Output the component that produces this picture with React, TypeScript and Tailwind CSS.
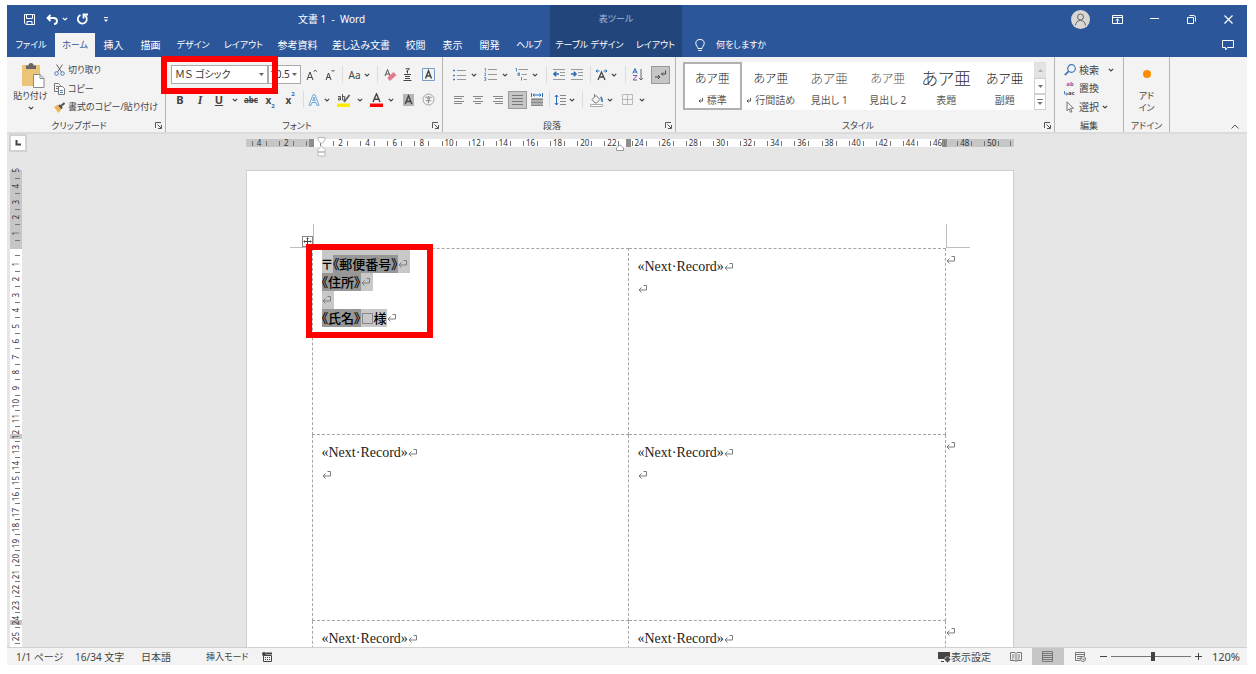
import React from "react";
import clsx from "clsx";

type IconProps = { className?: string };

/* ---------- small shared pieces ---------- */

function Svg({ w, h, className, children }: { w: number; h: number; className?: string; children: React.ReactNode }) {
  return (
    <svg
      width={w}
      height={h}
      viewBox={`0 0 ${w} ${h}`}
      fill="none"
      stroke="currentColor"
      aria-hidden="true"
      className={clsx("shrink-0", className)}
    >
      {children}
    </svg>
  );
}

function Chevron({ className }: IconProps) {
  return (
    <Svg w={6} h={4} className={className}>
      <path d="M.8.8 3 3 5.2.8" strokeWidth="1.200" />
    </Svg>
  );
}

function Caret({ className }: IconProps) {
  return (
    <Svg w={5} h={3} className={className}>
      <path d="M0 0h5L2.5 3z" fill="currentColor" stroke="none" />
    </Svg>
  );
}

function Return({ className }: IconProps) {
  return (
    <Svg w={9} h={8} className={clsx("inline-block text-[#7c7c7c]", className)}>
      <path d="M5.500.5h3v4.500H1M3.500 2.500 1 5l2.500 2.500" />
    </Svg>
  );
}

function Launcher() {
  return (
    <button type="button" aria-label="詳細設定" className="absolute right-[3px] bottom-[3px] text-[#555]">
      <Svg w={7} h={7}>
        <path d="M.5 6V.5H6M2.500 2.500 6 6M6.500 3v3.500H3" />
      </Svg>
    </button>
  );
}

function Tool({ label, className, children }: { label: string; className: string; children: React.ReactNode }) {
  return (
    <button
      type="button"
      aria-label={label}
      title={label}
      className={clsx("flex h-[18px] shrink-0 items-center justify-center leading-none text-[#444] hover:bg-[#d5d5d5]", className)}
    >
      {children}
    </button>
  );
}

function Sep({ className }: IconProps) {
  return (
    <span className={clsx("flex h-[17px] shrink-0 justify-center", className)}>
      <span className="w-px bg-[#dcdcdc]" />
    </span>
  );
}

function Group({
  title,
  className,
  launcher,
  children,
}: {
  title: string;
  className: string;
  launcher?: boolean;
  children: React.ReactNode;
}) {
  return (
    <section aria-label={title} className={clsx("relative flex flex-col border-r border-[#b4b4b4] pt-[5px]", className)}>
      <div className="flex-1">{children}</div>
      <div className={clsx("text-center text-[9px] leading-3 text-[#444]", launcher && "pr-[14px]")}>{title}</div>
      {launcher && <Launcher />}
    </section>
  );
}

/* ---------- title bar and tabs ---------- */

const TABS = [
  { name: "ファイル", width: "w-[48px] text-[9px]" },
  { name: "ホーム", width: "w-[40px] text-[9px]", active: true },
  { name: "挿入", width: "w-[37px]" },
  { name: "描画", width: "w-[37px]" },
  { name: "デザイン", width: "w-[48px] text-[9px]" },
  { name: "レイアウト", width: "w-[53px] text-[9px]" },
  { name: "参考資料", width: "w-[55px]" },
  { name: "差し込み文書", width: "w-[72px]" },
  { name: "校閲", width: "w-[37px]" },
  { name: "表示", width: "w-[37px]" },
  { name: "開発", width: "w-[37px]" },
  { name: "ヘルプ", width: "w-[42px] text-[9px]" },
];

function Tab({ name, width, active }: { name: string; width: string; active?: boolean }) {
  return (
    <button
      type="button"
      role="tab"
      aria-selected={!!active}
      className={clsx(
        "flex h-6 shrink-0 items-center justify-center whitespace-nowrap",
        width,
        active ? "bg-[#f3f3f3] text-[#2b579a]" : "hover:bg-white/10"
      )}
    >
      {name}
    </button>
  );
}

function Header() {
  return (
    <header className="flex h-[52px] shrink-0 bg-[#2b579a] text-white">
      <div className="flex shrink-0 flex-col">
        <div className="flex h-7 items-center">
          <button type="button" aria-label="上書き保存" className="ml-[15px] flex w-[14px] justify-center">
            <Svg w={11} h={11}>
              <path d="M.5.5h10v10H2L.5 9zM2.500.5v4h6v-4M3 10.500V7.500h5v3" />
            </Svg>
          </button>
          <button type="button" aria-label="元に戻す" className="ml-[10px] flex items-center">
            <Svg w={12} h={11}>
              <path d="M4.500 1 1.500 4l3 3M2 4h5.500c2.200 0 3.500 1 3.500 3S9.500 10 8 10" strokeWidth="1.800" />
            </Svg>
            <Chevron className="ml-1" />
          </button>
          <button type="button" aria-label="やり直し" className="ml-2">
            <Svg w={13} h={12}>
              <path d="M4.500 2A4.500 4.500 0 1 0 9 2.500M7.500 5.500V1.500h4.500" strokeWidth="1.800" />
            </Svg>
          </button>
          <button type="button" aria-label="クイック アクセスのカスタマイズ" className="ml-[15px]">
            <Svg w={4} h={5}>
              <path d="M0 .5h4" />
              <path d="M0 2.500h4L2 5z" fill="currentColor" stroke="none" />
            </Svg>
          </button>
          <h1 className="ml-[190px] whitespace-pre">文書 1&nbsp; -&nbsp; Word</h1>
        </div>
        <div role="tablist" className="flex">
          {TABS.map((tab) => (
            <Tab key={tab.name} {...tab} />
          ))}
        </div>
      </div>

      <div className="flex shrink-0 flex-col bg-[#22467c]">
        <div className="flex h-7 items-center justify-center text-[9px] text-[#a9bad4]">表ツール</div>
        <div role="tablist" className="flex">
          <Tab name="テーブル デザイン" width="w-[79px] text-[9px]" />
          <Tab name="レイアウト" width="w-[53px] text-[9px]" />
        </div>
      </div>

      <div className="flex min-w-0 flex-1 flex-col">
        <div className="flex h-7 items-center justify-end">
          <button type="button" aria-label="アカウント" className="rounded-full bg-[#d9d6d3] text-[#666]">
            <Svg w={19} h={19}>
              <circle cx="9.500" cy="7" r="3" />
              <path d="M4.500 15.500c.3-3.400 2.300-5 5-5s4.700 1.600 5 5" />
            </Svg>
          </button>
          <button type="button" aria-label="リボンの表示オプション" className="ml-[22px]">
            <Svg w={11} h={9}>
              <path d="M.5.5h10v8H.5zM.5 2.500h10M5.500 8V4M3.700 5.700l1.800-1.700 1.800 1.700" />
            </Svg>
          </button>
          <button type="button" aria-label="最小化" className="ml-[27px]">
            <Svg w={9} h={9}>
              <path d="M0 3.500h9" />
            </Svg>
          </button>
          <button type="button" aria-label="元のサイズに戻す" className="ml-[28px]">
            <Svg w={9} h={9}>
              <path d="M.5 2.500h6v6h-6zM2.500.5h4a2 2 0 0 1 2 2v4" />
            </Svg>
          </button>
          <button type="button" aria-label="閉じる" className="mr-[14px] ml-[28px]">
            <Svg w={9} h={9}>
              <path d="m.5.5 8 8M8.500.5l-8 8" strokeWidth="1.200" />
            </Svg>
          </button>
        </div>
        <div className="flex h-6 items-center">
          <button type="button" className="ml-[13px] flex items-center gap-[11px] text-[9px]">
            <Svg w={10} h={13}>
              <path d="M3 9.500C3 7.500.8 7 .8 4.500a4.200 4 0 0 1 8.400 0C9.200 7 7 7.500 7 9.500zM3.200 11.500h3.600" />
            </Svg>
            何をしますか
          </button>
          <button type="button" aria-label="コメント" className="mr-[13px] ml-auto">
            <Svg w={12} h={11}>
              <path d="M.5.5h11v7H5.500l-2 2.500v-2.500h-3z" />
            </Svg>
          </button>
        </div>
      </div>
    </header>
  );
}

/* ---------- ribbon ---------- */

function ClipboardGroup() {
  return (
    <Group title="クリップボード" launcher className="w-[159px] shrink-0">
      <div className="flex text-[9px]">
        <button type="button" className="flex w-[47px] shrink-0 flex-col items-center text-[#444]">
          <Svg w={24} h={26} className="ml-1">
            <path d="M1 3h18v21H1z" fill="#ecc477" stroke="none" />
            <path d="M5 3.500h2.500a2.500 2.500 0 0 1 5 0H15V7H5z" fill="#666" stroke="none" />
            <path d="M12.500 12.500h6.500l4 4v9H12.500z" fill="#fff" stroke="#8a8a8a" />
            <path d="M19 12.500v4h4" stroke="#8a8a8a" />
          </Svg>
          <span className="mt-px leading-[14px] whitespace-nowrap">貼り付け</span>
          <Chevron className="mt-[3px]" />
        </button>
        <div className="-mt-px text-[#444]">
          <button type="button" className="flex h-[18px] items-center gap-[3px]">
            <Svg w={11} h={12}>
              <path d="M2.500.5 7.500 8M8.500.5l-5 7.500" stroke="#666" />
              <circle cx="2.500" cy="9.500" r="1.800" stroke="#4a7ebb" />
              <circle cx="8.500" cy="9.500" r="1.800" stroke="#4a7ebb" />
            </Svg>
            切り取り
          </button>
          <button type="button" className="flex h-[19px] items-center gap-[3px]">
            <Svg w={11} h={12}>
              <path d="M.5.5h4L6.500 2.500v6h-6zM2 3.500h3M2 5.500h3" stroke="#777" />
              <path d="M4.500 3.500h4l2 2v6h-6z" fill="#fff" stroke="#777" />
              <path d="M6 7.500h3M6 9.500h3" stroke="#4a7ebb" />
            </Svg>
            コピー
          </button>
          <button type="button" className="flex h-[18px] items-center gap-[3px] whitespace-nowrap">
            <Svg w={11} h={11}>
              <path d="M0 5 4 2.500 7.500 7 4.500 11z" fill="#ecb45c" stroke="none" />
              <path d="m5 3 3 3.500M7 4l3.500-3" stroke="#555" strokeWidth="2" />
            </Svg>
            書式のコピー/貼り付け
          </button>
        </div>
      </div>
    </Group>
  );
}

function FontGroup() {
  return (
    <Group title="フォント" launcher className="w-[277px] shrink-0">
      <div className="relative flex h-[25px] items-center pl-[5px]">
        <div className="relative">
          <select
            aria-label="フォント"
            className="h-[19px] w-[97px] appearance-none border border-[#ababab] bg-white pl-[3px] text-[#333]"
          >
            <option>ＭＳ ゴシック</option>
          </select>
          <Caret className="pointer-events-none absolute top-2 right-1 text-[#666]" />
        </div>
        <div className="relative">
          <select
            aria-label="フォント サイズ"
            className="h-[19px] w-[33px] appearance-none border border-[#ababab] bg-white pl-px text-[#333]"
          >
            <option>10.5</option>
          </select>
          <Caret className="pointer-events-none absolute top-2 right-1 text-[#666]" />
        </div>
        <Tool label="フォント サイズの拡大" className="w-5">
          <Svg w={11} h={12}>
            <path d="m1 11 3-8 3 8M2 8.500h4M7.800 2.700 9.300 1l1.500 1.700" />
          </Svg>
        </Tool>
        <Tool label="フォント サイズの縮小" className="w-[18px]">
          <Svg w={10} h={12}>
            <path d="m1 11 2.500-7L6 11M2 8.500h3M6.500 1 8 2.500 9.500 1" />
          </Svg>
        </Tool>
        <Sep className="w-[7px]" />
        <Tool label="文字種の変換" className="w-[17px]">
          Aa
        </Tool>
        <Tool label="文字種の変換のオプション" className="w-2">
          <Chevron />
        </Tool>
        <Sep className="w-3" />
        <Tool label="すべての書式をクリア" className="w-[14px]">
          <Svg w={13} h={13}>
            <path d="m1 8 2.500-6.500L6 8M2 6h3" stroke="#555" />
            <path d="M3.500 9.500 9.500 4l3 3-6 5.500H5z" fill="#e57a8b" stroke="none" />
          </Svg>
        </Tool>
        <Tool label="ルビ" className="w-5">
          <Svg w={9} h={13}>
            <path d="M2.500.8h4L3.500 3.500M4.500 2.500v3M1 6.500h7M2 8.500h5M2 10.500h5M.5 12.500h8" />
          </Svg>
        </Tool>
        <Tool label="囲み線" className="w-[22px]">
          <Svg w={13} h={13}>
            <path d="M.5.5h12v12H.5z" stroke="#7c9cc8" />
            <path d="M3.500 10.500 6.500 2.800l3 7.700M4.500 8h4" strokeWidth="1.400" />
          </Svg>
        </Tool>
        {/* highlight around the font name */}
        <div className="pointer-events-none absolute -top-[6px] -left-[5px] h-[38px] w-[117px] border-6 border-[#ff0000]" />
      </div>
      <div className="flex h-[25px] items-center pl-[5px]">
        <Tool label="太字" className="w-[18px] text-[11px] font-bold">
          B
        </Tool>
        <Tool label="斜体" className="w-[22px] font-['Liberation_Serif',serif] text-[12px] font-bold italic">
          I
        </Tool>
        <Tool label="下線" className="w-4 text-[11px] font-bold underline">
          U
        </Tool>
        <Tool label="下線のオプション" className="w-4">
          <Chevron />
        </Tool>
        <Tool label="取り消し線" className="w-4 text-[8px] font-bold line-through">
          abc
        </Tool>
        <Tool label="下付き" className="w-[22px] font-bold">
          x<span className="self-end text-[6px] text-[#2b6cb5]">2</span>
        </Tool>
        <Tool label="上付き" className="w-[18px] font-bold">
          x<span className="self-start text-[6px] text-[#2b6cb5]">2</span>
        </Tool>
        <Sep className="w-2" />
        <Tool label="文字の効果と体裁" className="w-[14px]">
          <Svg w={12} h={12}>
            <path d="M1 11.300 5 .8h2l4 10.500H9L8 8.500H4l-1 2.800zM4.700 6.700h2.600L6 3z" fill="#fff" stroke="#5b9bd5" strokeWidth=".9" />
          </Svg>
        </Tool>
        <Tool label="文字の効果のオプション" className="w-3">
          <Chevron />
        </Tool>
        <Tool label="蛍光ペンの色" className="w-[22px]">
          <Svg w={14} h={14}>
            <path d="M0 10.500h13V14H0z" fill="#ffeb00" stroke="none" />
            <path d="M1 3.500h2.500V7H1.500V5.200h2M5.500 1v6h2.200V3.500H5.500" strokeWidth=".9" />
            <path d="m7 9 5.500-7" stroke="#666" strokeWidth="2" />
          </Svg>
        </Tool>
        <Tool label="蛍光ペンのオプション" className="w-[10px]">
          <Chevron />
        </Tool>
        <Tool label="フォントの色" className="w-[22px]">
          <Svg w={13} h={14}>
            <path d="M0 10.500h13V14H0z" fill="#ff0000" stroke="none" />
            <path d="M3 9 6.500.8 10 9M4.200 6.300h4.600" strokeWidth="1.400" />
          </Svg>
        </Tool>
        <Tool label="フォントの色のオプション" className="w-2">
          <Chevron />
        </Tool>
        <Tool label="文字の網かけ" className="w-[26px]">
          <Svg w={11} h={12}>
            <path d="M0 0h11v12H0z" fill="#b5b5b5" stroke="none" />
            <path d="M2.200 10 5.500 1.800 8.800 10M3.500 7.500h4" strokeWidth="1.400" />
          </Svg>
        </Tool>
        <Tool label="囲い文字" className="w-[14px]">
          <Svg w={13} h={13}>
            <circle cx="6.500" cy="6.500" r="5.500" stroke="#999" strokeWidth=".9" />
            <path d="M6.500 3v1M3.800 5V4.200h5.400V5M5 5.700h3L6.500 7v3H5.700M3.800 7.700h5.400" stroke="#666" strokeWidth=".7" />
          </Svg>
        </Tool>
      </div>
    </Group>
  );
}

function AlignIcon({ d }: { d: string }) {
  return (
    <Svg w={12} h={10}>
      <path d={d} stroke="#888" />
    </Svg>
  );
}

function ParagraphGroup() {
  return (
    <Group title="段落" launcher className="w-[233px] shrink-0">
      <div className="flex h-[25px] items-center pl-[9px]">
        <Tool label="箇条書き" className="w-[14px]">
          <Svg w={13} h={12}>
            <path d="M0 1.500h2M0 6.500h2M0 10.500h2" stroke="#4a7ebb" strokeWidth="1.600" />
            <path d="M4 1.500h9M4 6.500h9M4 10.500h9" stroke="#999" />
          </Svg>
        </Tool>
        <Tool label="箇条書きのオプション" className="w-4">
          <Chevron />
        </Tool>
        <Tool label="段落番号" className="w-4">
          <Svg w={13} h={13}>
            <path d="M.5.5h1v3M.3 5h1.400v1.200L.5 7.500h1.500M.3 9.500h1.500v3H.3M.5 11h1" stroke="#4a7ebb" strokeWidth=".8" />
            <path d="M4 1.500h9M4 6.500h9M4 11.500h9" stroke="#999" />
          </Svg>
        </Tool>
        <Tool label="段落番号のオプション" className="w-[14px]">
          <Chevron />
        </Tool>
        <Tool label="アウトライン" className="w-[18px]">
          <Svg w={13} h={13}>
            <path d="M.5.5h1v3M3 5h1.500v2.500H3zM6.500 9v3.500" stroke="#4a7ebb" strokeWidth=".9" />
            <path d="M3.500 1.500H13M6.500 6.500H12M8.500 11.500H12" stroke="#999" />
          </Svg>
        </Tool>
        <Tool label="アウトラインのオプション" className="w-[10px]">
          <Chevron />
        </Tool>
        <Sep className="w-3" />
        <Tool label="インデントを減らす" className="w-[14px]">
          <Svg w={12} h={11}>
            <path d="M0 .5h12M7 3.500h5M7 6.500h5M0 10.500h12" stroke="#999" />
            <path d="M6 5H1M3.200 2.800 1 5l2.200 2.200" stroke="#2b6cb5" strokeWidth="1.600" />
          </Svg>
        </Tool>
        <Tool label="インデントを増やす" className="w-[22px]">
          <Svg w={12} h={11}>
            <path d="M0 .5h12M7 3.500h5M7 6.500h5M0 10.500h12" stroke="#999" />
            <path d="M0 5h5M2.800 2.800 5 5 2.800 7.200" stroke="#2b6cb5" strokeWidth="1.600" />
          </Svg>
        </Tool>
        <Sep className="w-1" />
        <Tool label="拡張書式" className="w-[18px]">
          <Svg w={13} h={12}>
            <path d="m3 11 3.500-8 3.500 8M4 8h5" strokeWidth="1.300" />
            <path d="M1 2h3.500M2.500.5 1 2l1.500 1.500M12 2H8.500M10.500.5 12 2l-1.500 1.500" stroke="#2b6cb5" />
          </Svg>
        </Tool>
        <Tool label="拡張書式のオプション" className="w-2">
          <Chevron />
        </Tool>
        <Sep className="w-[14px]" />
        <Tool label="並べ替え" className="w-3">
          <Svg w={12} h={13}>
            <path d="m.8 5.500 2.200-5 2.200 5M1.500 4h3" stroke="#2b6cb5" />
            <path d="M1 7.500h4L1 12h4.200" stroke="#8a4fa3" />
            <path d="M9 1v11M7 10l2 2 2-2" stroke="#666" />
          </Svg>
        </Tool>
        <Tool label="編集記号の表示/非表示" className="ml-[7px] w-[19px] border border-[#9a9a9a] bg-[#c6c6c6]">
          <Svg w={13} h={12}>
            <path d="M1 8h5M4 6l2 2-2 2M11.500 1.500V5H7.500M9 3.500 7.500 5 9 6.500" />
          </Svg>
        </Tool>
      </div>
      <div className="flex h-[25px] items-center pl-[9px]">
        <Tool label="左揃え" className="w-[14px]">
          <AlignIcon d="M1 1.500h10M1 3.500h8M1 6.500h10M1 8.500h8" />
        </Tool>
        <Tool label="中央揃え" className="w-6">
          <AlignIcon d="M1 1.500h10M3 3.500h6M1 6.500h10M3 8.500h6" />
        </Tool>
        <Tool label="右揃え" className="w-4">
          <AlignIcon d="M1 1.500h10M3 3.500h8M1 6.500h10M3 8.500h8" />
        </Tool>
        <Tool label="両端揃え" className="ml-[2px] w-[19px] border border-[#9a9a9a] bg-[#c6c6c6]">
          <Svg w={11} h={11}>
            <path d="M0 1.500h11M0 4.500h11M0 7.500h11M0 10.500h11" stroke="#777" />
          </Svg>
        </Tool>
        <Tool label="均等割り付け" className="w-5">
          <Svg w={12} h={13}>
            <path d="M.5 0v4M11.500 0v4M2 2h8M3.500.7 2 2l1.500 1.300M8.500.7 10 2 8.500 3.300" stroke="#2b6cb5" />
            <path d="M0 5h12v8H0z" fill="#b0b0b0" stroke="none" />
            <path d="M0 6.500h12M0 9.500h12M0 12.500h12" stroke="#888" />
          </Svg>
        </Tool>
        <Sep className="w-1" />
        <Tool label="行と段落の間隔" className="w-[18px]">
          <Svg w={12} h={12}>
            <path d="M2.500 1v10M.8 3l1.700-2 1.700 2M.8 9l1.700 2 1.700-2" stroke="#2b6cb5" />
            <path d="M6 1.500h6M6 4.500h6M6 7.500h6M6 10.500h6" stroke="#888" />
          </Svg>
        </Tool>
        <Tool label="行間のオプション" className="w-[6px]">
          <Chevron />
        </Tool>
        <Sep className="w-[14px]" />
        <Tool label="塗りつぶし" className="w-4">
          <Svg w={14} h={14}>
            <path d="M.5 11.500h12v2H.5z" fill="#fff" stroke="#aaa" />
            <path d="M2 6.500 6 2.500l4 4-3.500 3.500H5zM4.500 4V1" stroke="#777" />
            <path d="M10.500 4c1.500 1 2 2.500 1.500 5" stroke="#2b6cb5" strokeWidth="1.400" />
          </Svg>
        </Tool>
        <Tool label="塗りつぶしのオプション" className="w-[10px]">
          <Chevron />
        </Tool>
        <Tool label="罫線" className="w-6">
          <Svg w={11} h={11}>
            <path d="M.5.5h10v10H.5zM5.500.5v10M.5 5.500h10" stroke="#b8b8b8" />
          </Svg>
        </Tool>
        <Tool label="罫線のオプション" className="w-[6px]">
          <Chevron />
        </Tool>
      </div>
    </Group>
  );
}

const STYLES = [
  { name: "標準", mark: true, sample: "text-[12px] text-[#222]" },
  { name: "行間詰め", mark: true, sample: "text-[12px] text-[#222]" },
  { name: "見出し 1", sample: "text-[13px] text-[#555]" },
  { name: "見出し 2", sample: "text-[12px] text-[#555]" },
  { name: "表題", sample: "text-[17px] text-[#333]" },
  { name: "副題", sample: "text-[13px] text-[#222]" },
];

function StylesGroup() {
  return (
    <Group title="スタイル" launcher className="min-w-0 flex-1">
      <div className="mr-2 ml-[7px] flex h-12 bg-white">
        {STYLES.map((style, i) => (
          <button
            key={style.name}
            type="button"
            className={clsx(
              "flex min-w-0 flex-1 flex-col items-center justify-between pt-2 pb-[3px] whitespace-nowrap",
              i === 0 && "outline-2 -outline-offset-2 outline-[#b1b1b1]"
            )}
          >
            <span className={clsx("flex h-[18px] items-center font-light", style.sample)}>あア亜</span>
            <span className="flex items-center gap-1 leading-[14px] text-[#555]">
              {style.mark && (
                <Svg w={5} h={5}>
                  <path d="M4.500 0v3H1M2.500 1.500 1 3l1.500 1.500" />
                </Svg>
              )}
              {style.name}
            </span>
          </button>
        ))}
        <div className="flex w-3 shrink-0 flex-col text-[#777]">
          <button type="button" aria-label="前の行" className="flex flex-1 items-center justify-center border border-[#e0e0e0] bg-[#e3e3e3] text-[#b5b5b5]">
            <Caret className="rotate-180" />
          </button>
          <button type="button" aria-label="次の行" className="flex flex-1 items-center justify-center border border-[#d0d0d0]">
            <Caret />
          </button>
          <button type="button" aria-label="その他" className="flex flex-1 items-center justify-center border border-[#d0d0d0]">
            <Svg w={6} h={6}>
              <path d="M0 .5h6" />
              <path d="M.5 3h5L3 6z" fill="currentColor" stroke="none" />
            </Svg>
          </button>
        </div>
      </div>
    </Group>
  );
}

function Ribbon() {
  return (
    <div className="relative flex h-[75px] shrink-0 bg-[#f3f3f3]">
      <ClipboardGroup />
      <FontGroup />
      <ParagraphGroup />
      <StylesGroup />
      <Group title="編集" className="w-[69px] shrink-0">
        <div className="-mt-px pl-[9px] text-[#444]">
          <button type="button" className="flex h-[18px] items-center gap-[3px]">
            <Svg w={12} h={12}>
              <circle cx="7.500" cy="4.500" r="3.800" stroke="#3c76b8" strokeWidth="1.200" />
              <path d="M4.800 7.200.8 11.200" stroke="#3c76b8" strokeWidth="1.700" />
            </Svg>
            検索
            <Chevron className="ml-[6px]" />
          </button>
          <button type="button" className="flex h-[19px] items-center gap-[3px]">
            <span className="flex w-3 flex-col text-[6px] leading-[9px] font-bold">
              <span className="text-[#8a4fa3]">ab</span>
              <span className="flex items-center">
                <Svg w={4} h={5} className="text-[#2b6cb5]">
                  <path d="M.5 0v3H3.500M2.500 1.500 3.500 3 2.500 4.500" strokeWidth=".8" />
                </Svg>
                ac
              </span>
            </span>
            置換
          </button>
          <button type="button" className="flex h-[18px] items-center gap-[3px]">
            <Svg w={12} h={12}>
              <path d="M3 .8v9l2-2 1.500 3.500 1.500-.7L6.500 7.300h3z" stroke="#777" />
            </Svg>
            選択
            <Chevron />
          </button>
        </div>
      </Group>
      <Group title="アドイン" className="w-[46px] shrink-0">
        <button type="button" className="flex w-full flex-col items-center pt-2 text-[9px] leading-3 text-[#444]">
          <span className="mb-3 size-2 rounded-full bg-[#ff8c00]" />
          <span>アド</span>
          <span>イン</span>
        </button>
      </Group>
      <div className="w-[77px] shrink-0" />
      <button type="button" aria-label="リボンを折りたたむ" className="absolute right-2 bottom-[3px] text-[#555]">
        <Svg w={8} h={5}>
          <path d="M.5 4.500 4 1l3.500 3.500" />
        </Svg>
      </button>
    </div>
  );
}

/* ---------- document ---------- */

const H_MARKS = ["4", "2", "", ...Array.from({ length: 25 }, (_, i) => String((i + 1) * 2))];
const V_MARKS = ["5", "4", "3", "2", "1", "", ...Array.from({ length: 25 }, (_, i) => String(i + 1))];

function HorizontalRuler() {
  return (
    <div className="relative mx-auto flex h-[11px] w-[768px] bg-white text-[8px] leading-none text-[#333]">
      <div className="absolute inset-0 flex">
        <div className="w-[63px] bg-[#c6c6c6]" />
        <div className="w-[5px] bg-[#8e8e8e]" />
        <div className="w-[312px]" />
        <div className="w-[5px] bg-[#8e8e8e]" />
        <div className="w-[311px]" />
        <div className="w-[5px] bg-[#8e8e8e]" />
        <div className="flex-1 bg-[#c6c6c6]" />
      </div>
      {H_MARKS.map((mark, i) => (
        <div key={i} className="relative flex min-w-0 flex-1 items-center justify-center">
          <div className="flex w-[15px] items-center justify-between">
            <span className="h-[5px] w-px bg-[#777]" />
            {mark}
            <span className="h-[5px] w-px bg-[#777]" />
          </div>
        </div>
      ))}
      <div className="relative flex w-2 items-center justify-end pr-[2px]">
        <span className="h-[5px] w-px bg-[#777]" />
      </div>
      {/* indent handles */}
      <Svg w={9} h={20} className="absolute -top-[2px] left-[71px]">
        <path d="M1 .5h7v2.500L4.500 7 1 3zM1 15v-2.500L4.500 9 8 12.500V15zM1 15h7v4H1z" fill="#fff" stroke="#b8b8b8" />
      </Svg>
      <Svg w={8} h={7} className="absolute top-[5px] left-[370px]">
        <path d="M.5 6.500V4L4 .8 7.500 4v2.500z" fill="#fff" stroke="#999" />
      </Svg>
    </div>
  );
}

function VerticalRuler() {
  return (
    <div className="relative mt-[11px] ml-[3px] flex h-[481px] w-3 flex-col text-[8px] leading-none text-[#333]">
      <div className="absolute inset-x-0 top-[7px] flex h-[478px] flex-col bg-white">
        <div className="h-[79px] bg-[#c6c6c6]" />
        <div className="h-[185px]" />
        <div className="h-[5px] bg-[#c6c6c6]" />
        <div className="h-[181px]" />
        <div className="h-[5px] bg-[#c6c6c6]" />
      </div>
      {V_MARKS.map((mark, i) => (
        <div key={i} className="relative flex min-h-0 flex-1 items-center justify-center">
          <span className="rotate-180 [writing-mode:vertical-rl]">{mark}</span>
          <span className="absolute bottom-0 left-[5px] h-px w-[5px] bg-[#777]" />
        </div>
      ))}
    </div>
  );
}

function Field({ children }: { children: React.ReactNode }) {
  return <span className="inline-block h-[18px] bg-[#979797]">{children}</span>;
}

function AddressCell() {
  return (
    <div className="flex flex-col items-start pt-px text-[13px] leading-[18px] font-medium text-black">
      <p className="flex items-end bg-[#c8c8c8] pt-[5px] pr-[3px]">
        〒<Field>《郵便番号》</Field>
        <Return className="mb-[5px]" />
      </p>
      <p className="flex items-center bg-[#c8c8c8] pr-[3px]">
        <Field>《住所》</Field>
        <Return />
      </p>
      <p className="flex h-[18px] items-center bg-[#c8c8c8] pr-[3px]">
        <Return />
      </p>
      <p className="flex items-center">
        <Field>《氏名》</Field>
        <span className="flex items-center bg-[#c8c8c8]">
          <span className="mx-px size-[11px] border border-[#888]" />様
        </span>
        <Return />
      </p>
      {/* highlight around the merge fields */}
      <div className="pointer-events-none absolute -top-[5px] -left-[7px] h-[94px] w-[127px] border-6 border-[#ff0000]" />
    </div>
  );
}

function NextRecord() {
  return (
    <div className="pt-[7px] font-['Liberation_Serif',serif] text-[14px] leading-[22px] text-[#222]">
      <p className="flex items-center">
        «Next·Record»
        <Return />
      </p>
      <p className="flex h-[22px] items-center">
        <Return />
      </p>
    </div>
  );
}

function Page() {
  return (
    <article className="mx-auto mt-[23px] w-[768px] flex-1 border border-[#cfcfcf] bg-white pt-[53px]">
      {/* margin corners */}
      <div className="flex h-6 justify-between pr-[43px] pl-[43px]">
        <div className="relative w-6 border-r border-b border-[#bdbdbd]">
          <button
            type="button"
            aria-label="表の移動"
            className="absolute right-0 bottom-0 border border-[#888] bg-white text-[#444]"
          >
            <Svg w={9} h={9}>
              <path d="M4.500.5v8M.5 4.500h8M3.500 1.500h2M3.500 7.500h2M1.500 3.500v2M7.500 3.500v2" />
            </Svg>
          </button>
        </div>
        <div className="w-6 border-b border-l border-[#bdbdbd]" />
      </div>
      <table className="ml-[65px] table-fixed border-collapse">
        <tbody>
          {[0, 1, 2].map((row) => (
            <tr key={row} className="h-[186px]">
              <td className="relative w-[316px] border border-dashed border-[#a6a6a6] pl-[9px] align-top">
                {row === 0 ? <AddressCell /> : <NextRecord />}
              </td>
              <td className="w-[317px] border border-dashed border-[#a6a6a6] pl-[9px] align-top">
                <NextRecord />
              </td>
              <td className="w-4 pt-[5px] align-top leading-none">
                <Return />
              </td>
            </tr>
          ))}
        </tbody>
      </table>
    </article>
  );
}

function Workspace() {
  return (
    <main className="flex min-h-0 flex-1 overflow-hidden border-t-2 border-[#dcdcdc] bg-[#e6e6e6]">
      <div className="w-6 shrink-0">
        <button
          type="button"
          aria-label="タブの種類"
          className="ml-[2px] flex size-[18px] items-center justify-center border-2 border-[#d2d2d2] bg-white text-[#444]"
        >
          <Svg w={6} h={6}>
            <path d="M1.500 0v4.500H6" strokeWidth="2" />
          </Svg>
        </button>
        <VerticalRuler />
      </div>
      <div className="flex min-w-0 flex-1 flex-col pt-[5px] pr-[19px]">
        <HorizontalRuler />
        <Page />
      </div>
    </main>
  );
}

/* ---------- status bar ---------- */

function StatusBar() {
  return (
    <footer className="flex h-[18px] shrink-0 items-center border-t border-[#d0d0d0] bg-[#f3f3f3] pl-[9px] leading-none whitespace-nowrap text-[#444]">
      <button type="button" className="w-[59px] text-left">1/1 ページ</button>
      <button type="button" className="w-[66px] text-left">16/34 文字</button>
      <button type="button" className="w-[65px] text-left">日本語</button>
      <button type="button" className="w-14 text-left text-[9px]">挿入モード</button>
      <button type="button" aria-label="マクロの記録">
        <Svg w={10} h={10}>
          <path d="M1.500 3.500h8v6h-8z" />
          <path d="M4 1.500h6" strokeWidth="2" />
          <path d="M3 5.500h5M3 7.500h5" strokeDasharray="1 1" />
          <circle cx="2" cy="2" r="2" fill="currentColor" stroke="none" />
        </Svg>
      </button>
      <button type="button" className="ml-auto flex items-center">
        <Svg w={13} h={12}>
          <path d="M0 1h12v7H0z" fill="currentColor" stroke="none" />
          <path d="M3 10.500h3" />
          <circle cx="9.500" cy="8.500" r="3" fill="#f3f3f3" stroke="none" />
          <circle cx="9.500" cy="8.500" r="1.700" strokeWidth="1.400" />
          <path d="M9.500 5.500v6M6.500 8.500h6" strokeWidth=".8" />
        </Svg>
        表示設定
      </button>
      <button type="button" aria-label="閲覧モード" className="ml-[19px] text-[#777]">
        <Svg w={12} h={10}>
          <path d="M.5.5H5l1 1 1-1h4.500v8H7l-1 1-1-1H.5zM6 1.500v8M2 3h2.500M2 5h2.500M2 7h1.500M7.500 3H10M7.500 5H10M7.500 7h2" />
        </Svg>
      </button>
      <button type="button" aria-label="印刷レイアウト" className="ml-[10px] flex h-full w-8 items-center justify-center bg-[#c6c6c6] text-[#777]">
        <Svg w={11} h={11}>
          <path d="M.5.5h10v10H.5zM1 2.500h9M1 4.500h9M1 6.500h9M1 8.500h9" />
        </Svg>
      </button>
      <button type="button" aria-label="Web レイアウト" className="ml-[11px] text-[#777]">
        <Svg w={11} h={10}>
          <path d="M9.500 4V.5h-9v8H5M.5 2.500h9M2 4.500h5M2 6.500h3" />
          <circle cx="8" cy="7" r="2.500" />
          <path d="m6.500 6 1.500 1.500 1.500-.5" />
        </Svg>
      </button>
      <button type="button" aria-label="縮小" className="ml-[14px]">
        <Svg w={7} h={7}>
          <path d="M0 3.500h7" />
        </Svg>
      </button>
      <input
        type="range"
        aria-label="ズーム"
        min={0}
        max={100}
        defaultValue={53}
        className="ml-1 h-3 w-[80px] appearance-none bg-transparent [&::-webkit-slider-runnable-track]:h-px [&::-webkit-slider-runnable-track]:bg-[#777] [&::-webkit-slider-thumb]:-mt-1 [&::-webkit-slider-thumb]:h-[9px] [&::-webkit-slider-thumb]:w-1 [&::-webkit-slider-thumb]:appearance-none [&::-webkit-slider-thumb]:bg-[#444]"
      />
      <button type="button" aria-label="拡大" className="ml-1">
        <Svg w={7} h={7}>
          <path d="M0 3.500h7M3.500 0v7" />
        </Svg>
      </button>
      <button type="button" className="mr-[7px] ml-[10px] text-[11px]">120%</button>
    </footer>
  );
}

export default function App() {
  return (
    <div
      lang="ja"
      className="flex h-screen flex-col bg-white pt-[5px] pr-[9px] pb-[9px] pl-[7px] font-['Noto_Sans','Noto_Sans_CJK_JP',sans-serif] text-[10px] [font-feature-settings:'palt']"
    >
      <Header />
      <Ribbon />
      <Workspace />
      <StatusBar />
    </div>
  );
}
